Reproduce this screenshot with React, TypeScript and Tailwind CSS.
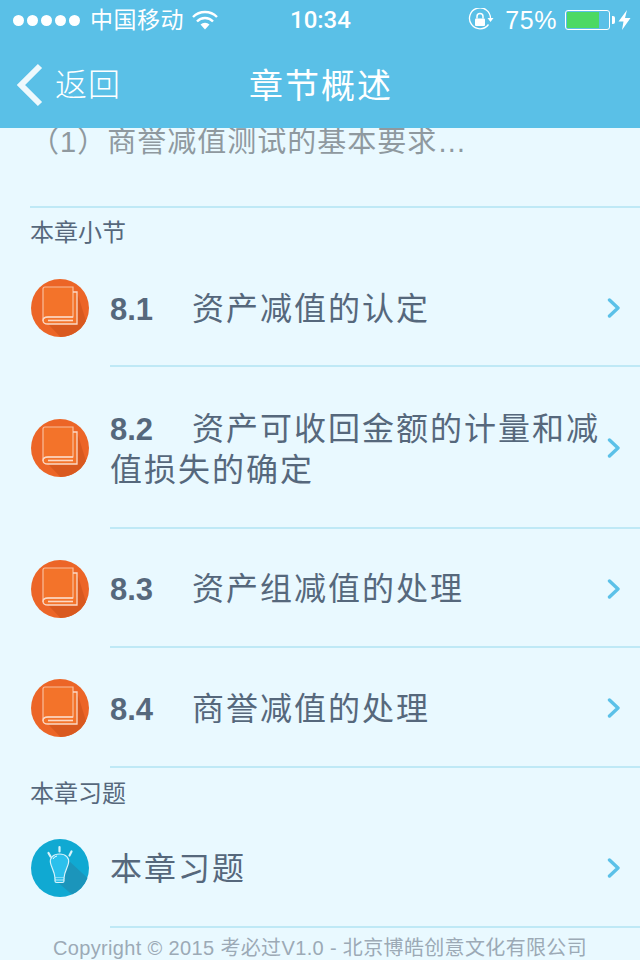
import React from 'react';

const FONT = "font-['Liberation_Sans','Noto_Sans_CJK_SC',sans-serif]";

const BookIcon = () => (
  <svg width="60" height="60" viewBox="0 0 60 60" className="shrink-0">
    <circle cx="30" cy="30" r="29" fill="#ec6527" />
    <path d="M47 14 L47 46 L18 46 L30.5 59 A29 29 0 0 0 56 43 Z" fill="#d9591f" />
    <path d="M43 14 H47 V46 H18 Q13 46 13 42.5 V11 Q13 9 15 9 H43 V14 Z" fill="#f3732a" />
    <path d="M15 9 H43 V39 H18 Q13 39 13 43 V11 Q13 9 15 9 Z" fill="#f3732a" stroke="#f8bd9c" strokeWidth="1.2" />
    <path d="M43 14 H47 V46 H18 Q13 46 13 42.5 Q13 39 18 39 H43" fill="none" stroke="#fbd9c6" strokeWidth="1.3" />
    <path d="M18 42.5 H43" stroke="#fbd9c6" strokeWidth="1.6" />
  </svg>
);

const BulbIcon = () => (
  <svg width="60" height="60" viewBox="0 0 60 60" className="shrink-0">
    <circle cx="30" cy="30" r="29" fill="#10a9d2" />
    <path d="M38 22 L57.5 40 A29 29 0 0 1 42 56.5 L25 42 Z" fill="#1b95bb" />
    <path d="M29.5 16 C23 16 19.5 20 20.5 25 C21.5 30 24.5 33 25 40 H34 C34.5 33 37.5 30 38.5 25 C39.5 20 36 16 29.5 16 Z" fill="#2bc0ec" stroke="#d8f3fb" strokeWidth="1.2" />
    <path d="M25 40 V43 Q25 44.5 26.5 44.5 H32.5 Q34 44.5 34 43 V40" fill="#2bc0ec" stroke="#d8f3fb" strokeWidth="1.2" />
    <path d="M25 42 H34" stroke="#d8f3fb" strokeWidth="0.8" />
    <path d="M23 21 Q24 18.5 27 18" fill="none" stroke="#eafaff" strokeWidth="1" />
    <path d="M29.5 9 V13.5 M18.5 15 L20.5 18.5 M41.5 13.5 L39.5 17.5" stroke="#d8f3fb" strokeWidth="2.2" strokeLinecap="round" />
  </svg>
);

const Chevron = () => (
  <svg width="14" height="20" viewBox="0 0 14 20" className="shrink-0 mt-[2px]">
    <path d="M2.5 2 L11 10 L2.5 18" fill="none" stroke="#5cc1e8" strokeWidth="3.4" strokeLinecap="round" strokeLinejoin="round" />
  </svg>
);

const StatusBar = () => (
  <div className="h-10 flex items-center pl-[13px] pr-[9px] text-white">
    <div className="flex items-center w-[277px]">
      <div className="flex gap-[3px]">
        {[0, 1, 2, 3, 4].map((i) => (
          <span key={i} className="w-[11px] h-[11px] rounded-full bg-white" />
        ))}
      </div>
      <span className="ml-[10px] text-[23px] leading-none tracking-[0.5px]">中国移动</span>
      <svg width="26" height="20" viewBox="0 0 26 20" className="ml-[8px]">
        <path d="M1 7 A17 17 0 0 1 25 7 M5 11.5 A11 11 0 0 1 21 11.5" fill="none" stroke="#fff" strokeWidth="2.4" />
        <path d="M8.5 14.5 A6.5 6.5 0 0 1 17.5 14.5 L13 19.5 Z" fill="#fff" />
      </svg>
    </div>
    <span className="font-['Roboto',sans-serif] text-[24px] leading-none font-medium">10:34</span>
    <div className="flex items-center ml-auto">
      <svg width="26" height="24" viewBox="0 0 26 24">
        <path d="M20.5 16.5 A10.5 10.5 0 1 1 22.5 10.5" fill="none" stroke="#fff" strokeWidth="1.3" />
        <path d="M19.5 10 H25.5 L22.5 14 Z" fill="#fff" />
        <rect x="7" y="10.5" width="10" height="7.5" rx="1" fill="#fff" />
        <path d="M9 10.5 V8.5 A3 3 0 0 1 15 8.5 V10.5" fill="none" stroke="#fff" strokeWidth="1.5" />
      </svg>
      <span className="ml-[11px] text-[25px] leading-none tracking-[0.6px]">75%</span>
      <div className="ml-[8px] w-[45px] h-[20px] rounded-[3px] border border-white p-[1px] flex">
        <div className="w-[32px] bg-[#4cd964]" />
      </div>
      <span className="w-[3px] h-[8px] ml-[2px] bg-white rounded-r-[2px]" />
      <svg width="13" height="20" viewBox="0 0 13 20" className="ml-[3px]">
        <path d="M9 0 L0.5 11.5 H5.5 L4 20 L12.5 8 H7 Z" fill="#fff" />
      </svg>
    </div>
  </div>
);

const NavBar = () => (
  <div className="h-[88px] relative flex items-center text-white">
    <svg width="28" height="44" viewBox="0 0 28 44" className="ml-[16px] mt-[2px]">
      <path d="M24 3 L5 22 L24 41" fill="none" stroke="#eef9fd" strokeWidth="6" />
    </svg>
    <span className="ml-[11px] mt-[2px] text-[32px] leading-none tracking-[1px] font-light">返回</span>
    <h1 className="absolute left-[2px] right-0 top-[29px] text-center text-[34px] leading-none tracking-[2px] font-normal">章节概述</h1>
  </div>
);

type RowProps = { title: React.ReactNode; height: string; icon: React.ReactNode };

const Row = ({ title, height, icon }: RowProps) => (
  <div className={`${height} shrink-0 flex items-center pl-[30px]`}>
    {icon}
    <div className="ml-[20px] flex-1 self-stretch flex items-center pr-[19px] border-b-2 border-[#bfe9f6]">
      <div className="flex-1 pt-[4px] text-[32px] leading-[40px] tracking-[2px] text-[#56687c]">{title}</div>
      <Chevron />
    </div>
  </div>
);

const Num = ({ children }: { children: React.ReactNode }) => (
  <span className="text-[31px] font-bold tracking-normal mr-[39px]">{children}</span>
);

const book = <BookIcon />;

export default function App() {
  return (
    <div className={`${FONT} w-[640px] h-[960px] overflow-hidden bg-[#e9f9ff] flex flex-col`}>
      <header className="bg-[#5ac0e7] h-[128px] shrink-0">
        <StatusBar />
        <NavBar />
      </header>

      <div className="h-[78px] shrink-0 pl-[30px] text-[29px] leading-[28px] text-[#8f999f] overflow-hidden tracking-[1px]">
        （1）商誉减值测试的基本要求…
      </div>

      <div className="h-[43px] shrink-0 ml-[30px] pt-[9px] border-t-2 border-[#bfe9f6] flex items-center text-[24px] leading-none text-[#56687c]">
        本章小节
      </div>
      <Row height="h-[118px]" icon={book} title={<><Num>8.1</Num>资产减值的认定</>} />
      <Row height="h-[162px]" icon={book} title={<><Num>8.2</Num>资产可收回金额的计量和减值损失的确定</>} />
      <Row height="h-[119px]" icon={book} title={<><Num>8.3</Num>资产组减值的处理</>} />
      <Row height="h-[120px]" icon={book} title={<><Num>8.4</Num>商誉减值的处理</>} />

      <div className="h-[40px] shrink-0 ml-[30px] pt-[12px] flex items-center text-[24px] leading-none text-[#56687c]">
        本章习题
      </div>
      <Row height="h-[120px]" icon={<BulbIcon />} title="本章习题" />

      <div className="mt-[8px] h-[24px] shrink-0 text-center text-[20px] leading-[24px] tracking-[0.35px] text-[#9caab6]">
        Copyright © 2015 考必过V1.0 - 北京博皓创意文化有限公司
      </div>
    </div>
  );
}
